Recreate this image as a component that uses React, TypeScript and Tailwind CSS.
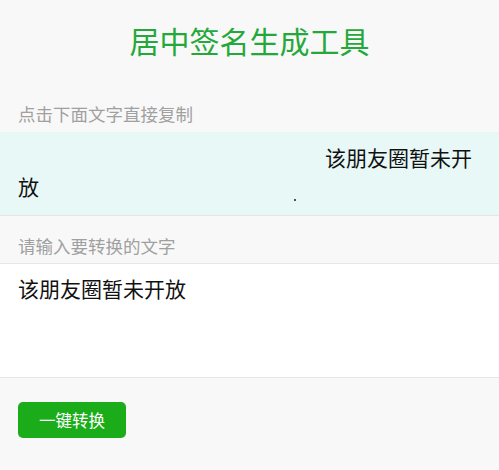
import React from "react";

export default function App() {
  const font = { fontFamily: '"Noto Sans CJK SC", "Noto Sans", sans-serif' };
  return (
    <div className="w-[499px] h-[470px] bg-[#f8f8f8] overflow-hidden" style={font}>
      <div className="h-[80px] flex items-center justify-center">
        <h1 className="text-[30px] leading-none text-[#25a83a] font-normal">居中签名生成工具</h1>
      </div>
      <div className="h-[52px] pt-[25px] px-[18px] text-[17.5px] leading-none text-[#a0a0a0]">
        点击下面文字直接复制
      </div>
      <div className="bg-[#e8f8f7] border-b border-[#e6e6e6] pt-[11px] pb-[13px] px-[18px] h-[84px]">
        <p className="text-[21px] leading-[29px] text-[#111] indent-[307px]">
          该朋友圈暂未开放
          <span className="inline-block w-[2px] h-[2px] ml-[255px] bg-[#555] align-[-6px]" />
        </p>
      </div>
      <div className="h-[47px] pt-[21px] px-[18px] text-[17.5px] leading-none text-[#a0a0a0]">
        请输入要转换的文字
      </div>
      <div className="bg-white border-y border-[#e6e6e6] h-[115px] pt-[10px] px-[18px]">
        <p className="text-[21px] leading-[29px] text-[#111]">该朋友圈暂未开放</p>
      </div>
      <div className="pt-[24px] px-[18px]">
        <button className="w-[108px] h-[36px] rounded-[5px] bg-[#1aad19] text-white text-[16.5px] leading-none flex items-center justify-center">
          一键转换
        </button>
      </div>
    </div>
  );
}
